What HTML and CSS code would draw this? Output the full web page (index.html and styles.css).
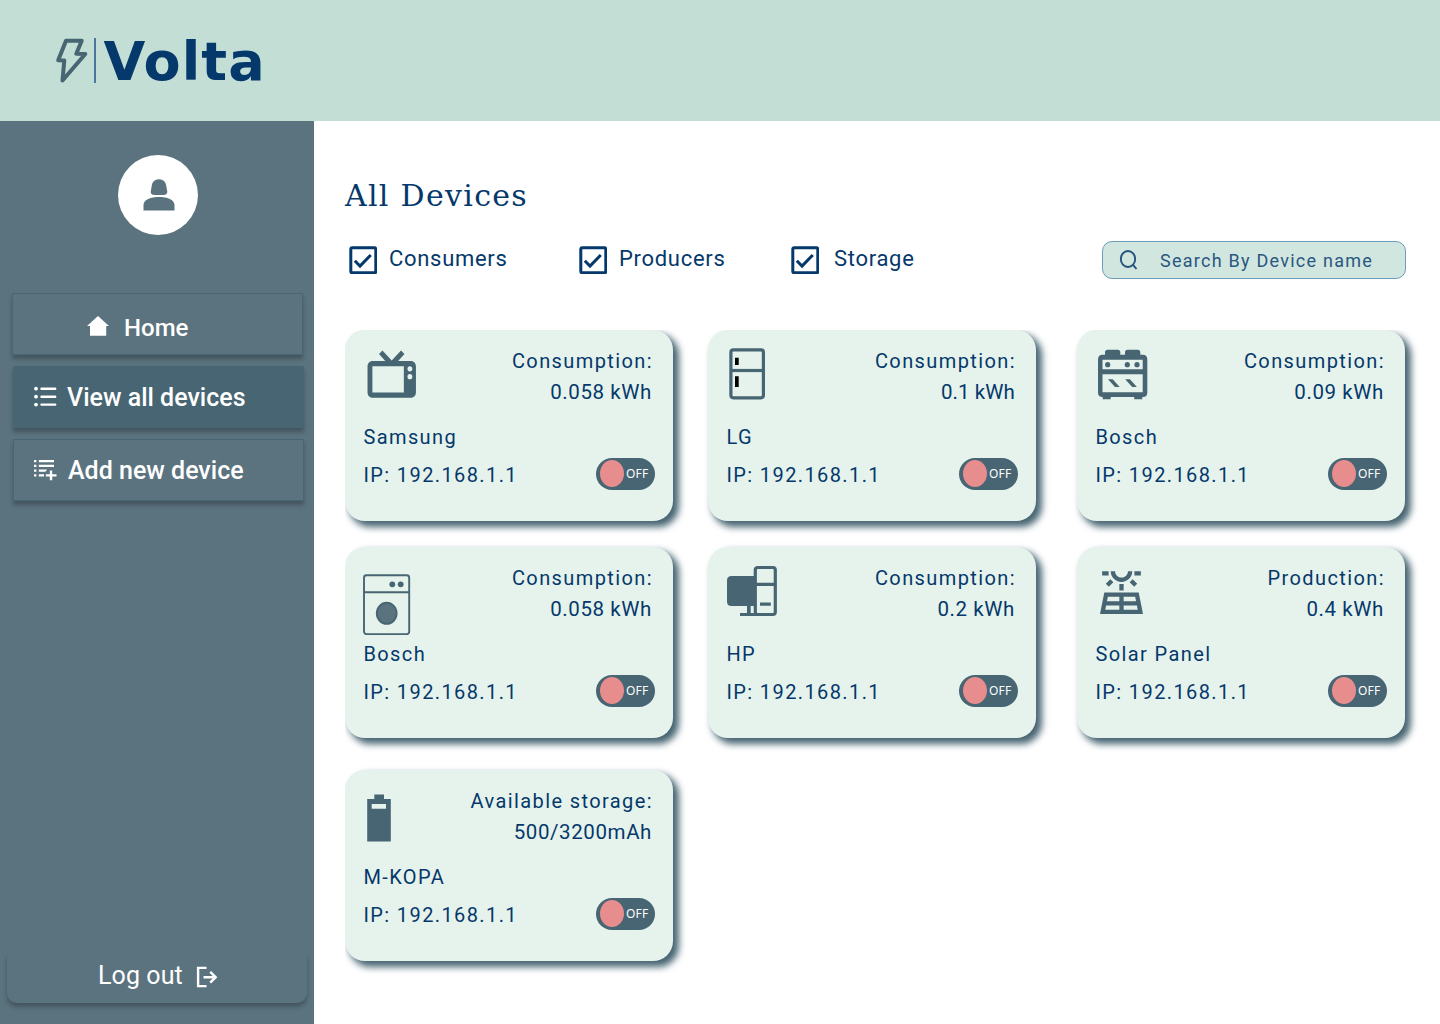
FILE: index.html
```html
<!DOCTYPE html>
<html lang="en">
<head>
<meta charset="utf-8">
<title>Volta – All Devices</title>
<link rel="stylesheet" href="styles.css">
</head>
<body>
<header class="topbar">
  <svg class="bolt" width="32" height="46" viewBox="0 0 32 46"><path d="M10 3.7H25.7L20.3 16.7L29.3 17L6.5 43.5L8.3 23.5L2.2 23.3Z"/></svg>
  <span class="divider"></span>
  <span class="brand">Volta</span>
</header>
<div class="body">
  <aside class="sidebar">
    <div class="avatar">
      <svg width="32" height="32" viewBox="0 0 32 32"><path d="M16 .3C20.5.3 23 3.400 23.300 7L24.300 13C24.300 15 22.500 15.900 20.800 15.900H11.200C9.500 15.900 7.700 15 7.700 13L8.700 7C9 3.400 11.500.3 16 .3ZM.5 31.600V26C.5 20.500 8 17.900 16 17.900S31.500 20.500 31.500 26V31.600Z"/></svg>
    </div>
    <nav class="menu">
      <a class="item home">
        <svg width="22" height="20" viewBox="0 0 22 20"><path d="M11 0L22 10H19.200V19.700H3V10H0Z"/></svg>
        <span>Home</span>
      </a>
      <a class="item active">
        <svg width="23" height="22" viewBox="0 0 23 22"><g class="lines"><path d="M7.500 2.700H21.200M7.500 10.700H21.200M7.500 18.600H21.200"/></g><circle cx="2" cy="2.700" r="1.900"/><circle cx="2" cy="10.700" r="1.900"/><circle cx="2" cy="18.600" r="1.900"/></svg>
        <span>View all devices</span>
      </a>
      <a class="item add">
        <svg width="23" height="22" viewBox="0 0 23 22"><path d="M0 1H2.400V3.200H0ZM4.800 1H20V3.200H4.800ZM0 5.800H2.400V8H0ZM4.800 5.800H20V8H4.800ZM0 10.500H2.400V12.700H0ZM4.800 10.500H13L11.500 12.700H4.800ZM0 15.200H2.400V17.400H0ZM4.800 15.200H10V17.400H4.800ZM15.800 11.400H18.200V15.200H22.500V17.400H18.200V21.300H15.800V17.400H11.800V15.200H15.800Z"/></svg>
        <span>Add new device</span>
      </a>
    </nav>
    <a class="logout">
      <span>Log out</span>
      <svg width="22" height="22" viewBox="0 0 22 22"><path d="M10.500 1.900H2.100V20.100H10.500M7.500 11.200H19.500M14.200 5.800L19.700 11.200L14.200 16.700"/></svg>
    </a>
  </aside>
  <main class="content">
    <h1 class="title">All Devices</h1>
    <div class="toolbar">
      <label class="filter consumers"><svg class="check" width="28" height="28" viewBox="0 0 28 28"><rect x="1.800" y="1.800" width="25" height="25" rx="1.500"/><path d="M5.800 14.800L11 20L21.800 9"/></svg><span>Consumers</span></label>
      <label class="filter producers"><svg class="check" width="28" height="28" viewBox="0 0 28 28"><rect x="1.800" y="1.800" width="25" height="25" rx="1.500"/><path d="M5.800 14.800L11 20L21.800 9"/></svg><span>Producers</span></label>
      <label class="filter storage"><svg class="check" width="28" height="28" viewBox="0 0 28 28"><rect x="1.800" y="1.800" width="25" height="25" rx="1.500"/><path d="M5.800 14.800L11 20L21.800 9"/></svg><span>Storage</span></label>
      <div class="search">
        <svg width="20" height="20" viewBox="0 0 20 20"><ellipse cx="9" cy="9" rx="7.200" ry="8"/><path d="M14 14.800L17.500 19"/></svg>
        <span>Search By Device name</span>
      </div>
    </div>
    <section class="devices">
      <article class="card">
        <div class="head">
          <svg class="icon" viewBox="0 0 60 71"><path transform="translate(-.3 -4.500) scale(2.420 2.630)" fill-rule="evenodd" d="M8.160 3L6.750 4.410L9.340 7H4C2.890 7 2 7.890 2 9V19C2 20.110 2.890 21 4 21H20C21.110 21 22 20.110 22 19V9C22 7.890 21.110 7 20 7H14.660L17.250 4.410L15.840 3L12 6.840ZM4 9H17V19H4ZM19.500 9A1 1 0 1 1 19.500 11A1 1 0 1 1 19.500 9ZM19.500 12A1 1 0 1 1 19.500 14A1 1 0 1 1 19.500 12Z"/></svg>
          <div class="reading"><div class="kind">Consumption:</div><div class="value">0.058 kWh</div></div>
        </div>
        <div class="name">Samsung</div>
        <div class="foot"><span>IP: 192.168.1.1</span><span class="toggle"><i class="knob"></i>OFF</span></div>
      </article>
      <article class="card">
        <div class="head">
          <svg class="icon" viewBox="0 0 60 71"><rect class="outline" x="4.900" y="2.800" width="32.500" height="48" rx="2.500"/><path class="outline" d="M5 23.500H37"/><path class="handle" d="M9 10.700H12.700V18H9ZM9 29.300H12.700V40H9Z"/></svg>
          <div class="reading"><div class="kind">Consumption:</div><div class="value tight">0.1 kWh</div></div>
        </div>
        <div class="name">LG</div>
        <div class="foot"><span>IP: 192.168.1.1</span><span class="toggle"><i class="knob"></i>OFF</span></div>
      </article>
      <article class="card">
        <div class="head">
          <svg class="icon" viewBox="0 0 60 71"><path fill-rule="evenodd" d="M10 7.700V5.200Q10 2.700 12.500 2.700H22.800Q25.300 2.700 25.300 5.200V7.700H30V5.200Q30 2.700 32.500 2.700H42.800Q45.300 2.700 45.300 5.200V7.700H48Q52.300 7.700 52.300 12.500V45.500Q52.300 50 48 50H47.300V52.300H39.200V50H15.700V52.300H7.700V50Q3 50 3 45.500V12.500Q3 7.700 7.500 7.700ZM7.500 12.700V22.300H47.700V12.700ZM7.500 27.200V45.200H47.700V27.200Z"/><circle cx="12.700" cy="17.700" r="2.600"/><circle cx="32.300" cy="17.700" r="2.600"/><circle cx="42" cy="17.700" r="2.600"/><path d="M13 32.300H17.700L24.700 40H20ZM30.200 32.300H34.900L41.900 40H37.200Z"/></svg>
          <div class="reading"><div class="kind">Consumption:</div><div class="value">0.09 kWh</div></div>
        </div>
        <div class="name">Bosch</div>
        <div class="foot"><span>IP: 192.168.1.1</span><span class="toggle"><i class="knob"></i>OFF</span></div>
      </article>
      <article class="card">
        <div class="head">
          <svg class="icon" viewBox="0 0 60 71"><g class="thin"><rect x="1" y="11.300" width="45.200" height="58.800" rx="2.500"/><path d="M1 28.300H46"/><ellipse class="drum" cx="23.700" cy="49.300" rx="9.900" ry="10.500"/></g><circle cx="29.300" cy="20.300" r="2.900"/><circle cx="37.700" cy="20.300" r="2.900"/></svg>
          <div class="reading"><div class="kind">Consumption:</div><div class="value">0.058 kWh</div></div>
        </div>
        <div class="name">Bosch</div>
        <div class="foot"><span>IP: 192.168.1.1</span><span class="toggle"><i class="knob"></i>OFF</span></div>
      </article>
      <article class="card">
        <div class="head">
          <svg class="icon" viewBox="0 0 60 71"><path d="M29 11.900H5.500Q1 11.900 1 16.500V37.500Q1 42 5.500 42H29ZM21 42H24.700V49.500H21ZM34 38.500H44.800V41.800H34Z"/><rect class="outline" x="29.300" y="3.500" width="20" height="47" rx="2.500"/><path class="outline" d="M29.300 20.300H49.300M14 50.500H32"/></svg>
          <div class="reading"><div class="kind">Consumption:</div><div class="value">0.2 kWh</div></div>
        </div>
        <div class="name">HP</div>
        <div class="foot"><span>IP: 192.168.1.1</span><span class="toggle"><i class="knob"></i>OFF</span></div>
      </article>
      <article class="card">
        <div class="head">
          <svg class="icon" viewBox="0 0 60 71"><g transform="translate(.7 2.900) scale(2.150 2.140)"><path fill-rule="evenodd" d="M20 12H4L2 22H22ZM18.360 14L18.760 16H13V14ZM11 14V16H5.240L5.640 14ZM4.840 18H11V20H4.440ZM13 20V18H19.160L19.560 20ZM11 8H13V11H11ZM3 2H6V4H3ZM18 2H21V4H18ZM12 7C14.760 7 17 4.760 17 2H15C15 3.650 13.650 5 12 5S9 3.650 9 2H7C7 4.760 9.240 7 12 7Z"/><path class="rays" d="M7.500 6.500L5.400 8.600M16.500 6.500L18.600 8.600"/></g></svg>
          <div class="reading"><div class="kind">Production:</div><div class="value">0.4 kWh</div></div>
        </div>
        <div class="name">Solar Panel</div>
        <div class="foot"><span>IP: 192.168.1.1</span><span class="toggle"><i class="knob"></i>OFF</span></div>
      </article>
      <article class="card">
        <div class="head">
          <svg class="icon" viewBox="0 0 60 71"><path fill-rule="evenodd" d="M4.200 12H11.300V7.400H21V12H27.800V54.400H4.200ZM8.700 17V21.800H23V17Z"/></svg>
          <div class="reading"><div class="kind">Available storage:</div><div class="value">500/3200mAh</div></div>
        </div>
        <div class="name">M-KOPA</div>
        <div class="foot"><span>IP: 192.168.1.1</span><span class="toggle"><i class="knob"></i>OFF</span></div>
      </article>
    </section>
  </main>
</div>
</body>
</html>
```
FILE: styles.css
```css
* { box-sizing: border-box; }
body {
  margin: 0;
  width: 1440px;
  height: 1024px;
  overflow: hidden;
  background: #fff;
  color: #05386b;
  font-family: Roboto, "Liberation Sans", sans-serif;
}
svg { display: block; flex: none; }

.topbar {
  display: flex;
  align-items: center;
  height: 121px;
  padding-left: 56px;
  background: #c3dfd5;
}
.bolt { margin-top: -1px; fill: none; stroke: #476572; stroke-width: 4; stroke-linejoin: round; }
.divider { width: 1.5px; height: 45px; margin-left: 6px; background: #4a76a0; }
.brand {
  margin: 2px 0 0 8px;
  font: bold 54px/60px "DejaVu Sans", sans-serif;
  letter-spacing: 1.1px;
}

.body { display: flex; height: 903px; }
.sidebar {
  display: flex;
  flex-direction: column;
  width: 314px;
  padding: 34px 7px 21px;
  background: #5b737f;
  color: #fff;
}
.avatar {
  display: flex;
  align-items: center;
  justify-content: center;
  width: 80px;
  height: 80px;
  margin-left: 111px;
  padding-left: 1px;
  border-radius: 50%;
  background: #fff;
}
.avatar svg { fill: #5b737f; }
.menu { display: flex; flex-direction: column; gap: 11px; margin: 58px 0 0 6px; }
.item {
  display: flex;
  align-items: center;
  gap: 10px;
  width: 291px;
  height: 62px;
  padding-left: 20px;
  border: 1px solid #476572;
  box-shadow: 0 4px 4px rgba(0, 0, 0, .25);
  font-size: 25px;
  font-weight: 500;
}
.item svg { fill: #fff; }
.home { margin-left: -1px; padding: 7px 0 0 74px; gap: 15px; font-size: 24px; }
.home svg { margin-top: -3px; }
.add { gap: 11px; }
.active { background: #476572; }
.lines { stroke: #fff; stroke-width: 2.4; stroke-linecap: round; }
.logout {
  display: flex;
  align-items: center;
  gap: 13px;
  height: 55px;
  margin-top: auto;
  padding-left: 91px;
  border-radius: 10px;
  box-shadow: 0 4px 4px rgba(0, 0, 0, .25);
  font-size: 25px;
  letter-spacing: .1px;
}
.logout svg { margin-top: 2px; fill: none; stroke: #fff; stroke-width: 2.4; }

.content { flex: 1; padding: 55px 0 0 31px; }
.title {
  margin: 0;
  font: 400 30px/40px "DejaVu Serif", serif;
  letter-spacing: 1.3px;
}
.toolbar { display: flex; align-items: center; width: 1061px; height: 38px; margin-top: 25px; }
.filter { display: flex; align-items: center; gap: 12px; font-size: 22px; letter-spacing: .7px; }
.filter span { margin-top: -4px; }
.check { margin-top: -1px; fill: none; stroke: #05386b; stroke-width: 3; }
.consumers { width: 230px; padding-left: 4px; }
.producers { width: 213px; padding-left: 4px; }
.storage { gap: 15px; padding-left: 3px; }
.search {
  display: flex;
  align-items: center;
  gap: 21px;
  width: 304px;
  height: 38px;
  margin-left: auto;
  padding-left: 16px;
  border: 1px solid #6f9bc0;
  border-radius: 10px;
  background: #d1e6df;
  color: #2a577f;
  font-size: 18px;
  letter-spacing: 1.25px;
}
.search svg { fill: none; stroke: #23527c; stroke-width: 1.9; }

.devices {
  display: grid;
  grid-template-columns: 363px 369px 328px;
  grid-template-rows: 217px 223px 191px;
  margin-top: 51px;
  clip-path: inset(0 -20px -20px 0);
}
.card {
  width: 328px;
  height: 191px;
  padding: 17px 18px 0;
  border-radius: 20px;
  background: #e5f3ec;
  box-shadow: 5px 5px 7px 1px #476572;
  font-size: 20px;
  letter-spacing: 1.4px;
}
.head { display: flex; justify-content: space-between; height: 71px; }
.icon { width: 60px; height: 71px; fill: #476572; }
.outline { fill: none; stroke: #476572; stroke-width: 3.2; }
.handle { fill: #000; }
.thin { fill: none; stroke: #476572; stroke-width: 1.9; }
.drum { fill: #5b737f; }
.rays { stroke: #476572; stroke-width: 2; }
.reading { text-align: right; line-height: 30px; margin: -1px 2px 0 0; }
.value { padding: 1px 1px 0 0; font-size: 20.5px; letter-spacing: .6px; }
.tight { letter-spacing: .1px; }
.name { padding-left: .4px; line-height: 38px; }
.foot { display: flex; align-items: center; justify-content: space-between; height: 38px; padding-left: .4px; }
.toggle {
  display: flex;
  align-items: center;
  gap: 2px;
  width: 59px;
  height: 32px;
  margin: -2px 0 0;
  padding: 0 0 1px 4px;
  border-radius: 16px;
  background: #476572;
  color: #fff;
  font: 12px/28px "Noto Sans", sans-serif;
  letter-spacing: .2px;
}
.knob { width: 24px; height: 27px; border-radius: 50%; background: #e88d8d; }
```
